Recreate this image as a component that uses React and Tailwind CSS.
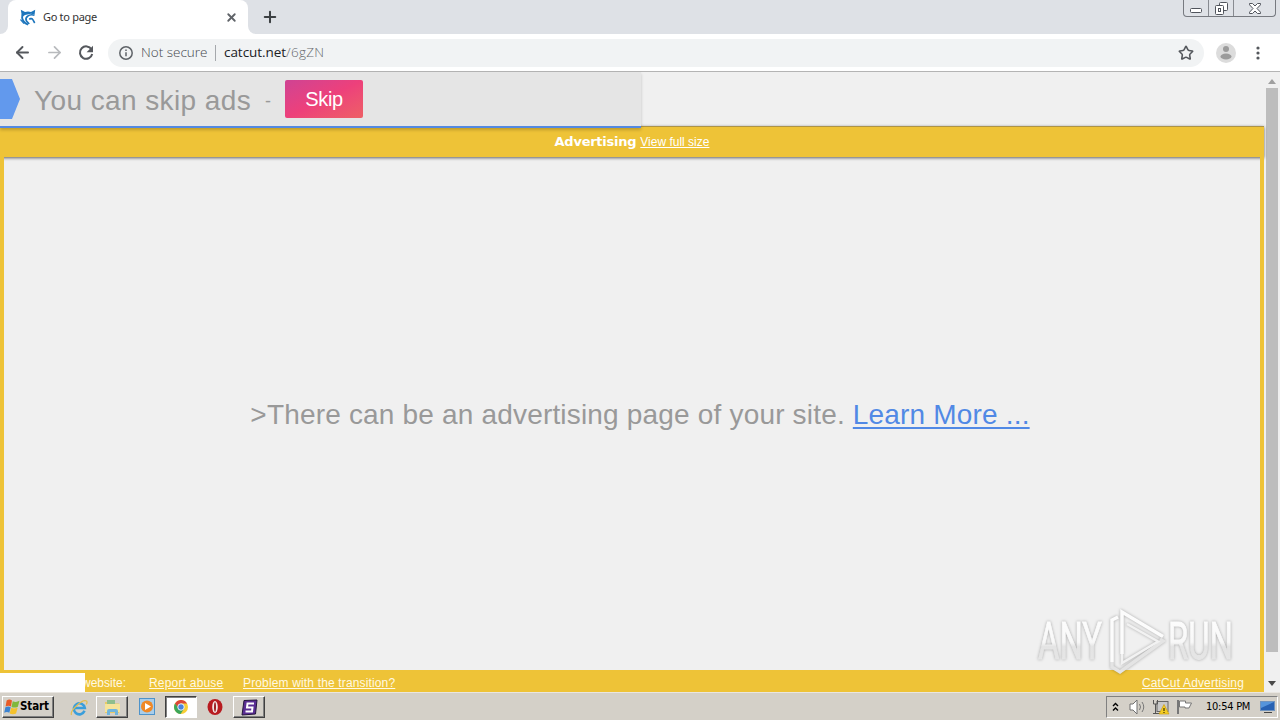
import { Star, X, Plus, ArrowLeft, ArrowRight } from 'lucide-react';

function CatLogo() {
  return (
    <svg width="16" height="17" viewBox="0 0 16 17" fill="none">
      <path d="M.8.8L5 3c2-.8 4-.8 6 0L15.200.8 14.600 5.500 11 4.800 5 6 2 8z" fill="#1c75bc" />
      <path d="M2.500 5.500C1 10 4 14.500 8 15.600" stroke="#1c75bc" strokeWidth="1.900" />
      <path d="M14.500 6.200C9 4.500 4.500 8.500 6.500 12l2.700 3" stroke="#1c75bc" strokeWidth="1.700" />
      <path d="M9.300 10.500c1-1.500 3-1 3.700.5l1.700 3" stroke="#1c75bc" strokeWidth="1.600" />
      <path d="M.5 10.500l3.500 4.200" stroke="#1c75bc" strokeWidth="1.200" />
    </svg>
  );
}

function TabStrip() {
  return (
    <div className="flex h-[34px] items-start bg-[#dee1e6]">
      <div className="flex h-full w-2 bg-white">
        <div className="w-2 rounded-br-lg bg-[#dee1e6]" />
      </div>
      <div className="flex h-full w-60 items-center rounded-t-lg bg-white pr-[10px] pl-3">
        <CatLogo />
        <span className="ml-[7px] flex-1 font-['Noto_Sans',sans-serif] text-[11px] tracking-[-0.3px] whitespace-nowrap text-[#333]">Go to page</span>
        <X size={13} strokeWidth={3.400} color="#5f6368" />
      </div>
      <div className="flex h-full w-2 bg-white">
        <div className="w-2 rounded-bl-lg bg-[#dee1e6]" />
      </div>
      <Plus size={18} strokeWidth={2.700} color="#3c4043" className="mt-2 ml-[5px]" />
      <div className="mr-1 ml-auto flex h-[17px] w-[93px] divide-x divide-[#888b91] rounded-b-[4px] border border-t-0 border-[#777a80] bg-[#dfe2e7]">
        <div className="flex w-[25px] justify-center pt-[8px]">
          <svg width="12" height="5" viewBox="0 0 12 5"><rect x=".5" y=".5" width="11" height="4" rx="1" fill="#fff" stroke="#50545c" /></svg>
        </div>
        <div className="flex w-[25px] justify-center pt-[2px]">
          <svg width="13" height="13" viewBox="0 0 13 13" fill="#fff" stroke="#50545c">
            <rect x="4.500" y=".5" width="8" height="8" rx="1" />
            <rect x=".5" y="3.500" width="8" height="9" rx="1" />
            <rect x="3.500" y="6.500" width="2" height="3" />
          </svg>
        </div>
        <div className="flex flex-1 justify-center pt-[3px]">
          <svg width="12" height="11" viewBox="0 0 12 11">
            <path d="M.5.5h3L6 3 8.500.5h3v1.300L8 5.500l3.500 3.700v1.300h-3L6 8l-2.500 2.500h-3V9.200L4 5.500.5 1.800z" fill="#fff" stroke="#50545c" />
          </svg>
        </div>
      </div>
    </div>
  );
}

function Toolbar() {
  return (
    <div className="flex h-[38px] items-center border-b border-[#b4b4b4] bg-white pl-[13px] font-['Open_Sans',sans-serif]">
      <ArrowLeft size={19} strokeWidth={2.400} color="#55585d" />
      <ArrowRight size={19} strokeWidth={2.200} color="#b8babd" className="ml-[13px]" />
      <svg width="16" height="16" viewBox="0 0 16 16" fill="none" className="ml-[14px]">
        <path d="M13.500 4.400A6.200 6.200 0 1 0 14.200 9" stroke="#55585d" strokeWidth="2" />
        <path d="M15 .8v6.400H8.600z" fill="#55585d" />
      </svg>
      <div className="ml-[14px] flex h-[28px] w-[1096px] items-center rounded-full bg-[#f1f3f4] pr-[10px] pl-[11px] whitespace-nowrap">
        <svg width="14" height="14" viewBox="0 0 14 14" fill="none" stroke="#5f6368" strokeWidth="1.500">
          <circle cx="7" cy="7" r="6.200" />
          <path d="M7 6.200v4M7 3.500V5" />
        </svg>
        <span className="ml-2 w-[67px] text-[13.500px] font-light text-[#44474c]">Not secure</span>
        <span className="ml-[7px] h-4 w-px bg-[#a5a8ac]" />
        <span className="ml-2 flex-1 text-[13.500px] font-light tracking-[0.3px] text-[#66696d]"><span className="font-normal tracking-[-0.05px] text-[#202124]">catcut.net</span>/6gZN</span>
        <Star size={16} strokeWidth={2.400} color="#55585d" />
      </div>
      <svg width="20" height="20" viewBox="0 0 20 20" className="ml-3">
        <circle cx="10" cy="10" r="10" fill="#dcdcdc" />
        <circle cx="10" cy="6" r="3" fill="#9b9b9b" />
        <ellipse cx="10" cy="13.500" rx="5.500" ry="3" fill="#9b9b9b" />
      </svg>
      <svg width="4" height="14" viewBox="0 0 4 14" fill="#55585d" className="ml-5">
        <circle cx="2" cy="2" r="1.600" /><circle cx="2" cy="7" r="1.600" /><circle cx="2" cy="12" r="1.600" />
      </svg>
    </div>
  );
}

function AnyRun() {
  return (
    <div className="absolute top-[534px] left-[1030px]">
      <svg width="214" height="74" viewBox="-4 0 214 74" fill="none" className="drop-shadow-[0_0_1.5px_rgba(0,0,0,0.3)]">
        <defs>
          <linearGradient id="fade" gradientUnits="userSpaceOnUse" x1="0" y1="12" x2="0" y2="56">
            <stop offset="0" stopColor="#fdfdfd" />
            <stop offset=".55" stopColor="#f8f8f8" />
            <stop offset=".65" stopColor="#e4e4e4" />
            <stop offset="1" stopColor="#e6e6e6" />
          </linearGradient>
        </defs>
        <g fill="url(#fade)" stroke="url(#fade)" strokeWidth=".8" fontFamily="Roboto, sans-serif" fontWeight="400" fontSize="51">
          <text x="4" y="53" textLength="64" lengthAdjust="spacingAndGlyphs">ANY</text>
          <text x="134" y="53" textLength="65" lengthAdjust="spacingAndGlyphs">RUN</text>
        </g>
        <path d="M88 48V6l41 24.500M84 11l-6 3v42" stroke="#fcfcfc" strokeWidth="3.500" />
        <path d="M78 56v5l8 5 43-31-3-2" stroke="#e4e4e4" strokeWidth="3.500" />
        <path d="M93 18l31 17.500L88 57V48" stroke="#f2f2f2" strokeWidth="2.500" />
      </svg>
    </div>
  );
}

function AdPage() {
  return (
    <div className="relative flex w-[1264px] flex-col bg-[#f0f0f0] font-['Liberation_Sans',Arial,sans-serif]">
      <div className="relative z-10 flex h-14 w-[641px] items-start border-b-2 border-[#5389e2] bg-[#e5e5e5] shadow-[0_2px_3px_rgba(0,0,0,0.2)]">
        <svg width="20" height="40" viewBox="0 0 20 40" className="mt-[7px]"><path d="M0 0h12l8 20-8 20H0z" fill="#6299ed" /></svg>
        <span className="mt-[9px] ml-[14px] w-[218px] text-[28px] leading-[40px] tracking-[0.4px] whitespace-nowrap text-[#999]">You can skip ads</span>
        <span className="mt-[17px] ml-[13px] w-5 text-[18px] leading-6 text-[#999]">-</span>
        <button className="mt-2 h-[38px] w-[78px] rounded-[2px] bg-linear-to-br from-[#cf4393] via-[#ed407b] to-[#ee5f65] text-[20px] tracking-[-0.4px] text-white">Skip</button>
      </div>
      <div className="-mt-[2px] flex h-[31px] items-center justify-center border-t border-[#ad9347] bg-[#eec337] text-white shadow-[0_1px_3px_rgba(0,0,0,0.6)]">
        <span className="font-['DejaVu_Sans',sans-serif] text-[13px] font-bold tracking-[-0.25px]">Advertising</span>
        <a className="ml-1 text-[12px] underline">View full size</a>
      </div>
      <div className="flex h-[513px] items-center justify-center border-x-4 border-[#eec337] pt-[2px] pl-4 text-[28px] tracking-[0.18px] whitespace-nowrap text-[#999]">
        <p>&gt;There can be an advertising page of your site. <a className="text-[#5189e5] underline decoration-2 underline-offset-[3px]">Learn More ...</a></p>
      </div>
      <div className="flex h-[22px] items-center bg-[#eec337] pr-5 text-[12px] whitespace-nowrap text-[#fff9e4]">
        <div className="relative z-10 mt-[3px] h-[19px] w-[85px] bg-white" />
        <span className="mt-[3px] -ml-[3px] w-[67px]">website:</span>
        <a className="mt-[3px] w-[94px] tracking-[0.2px] underline">Report abuse</a>
        <a className="mt-[3px] tracking-[0.15px] underline">Problem with the transition?</a>
        <a className="mt-[3px] ml-auto tracking-[0.15px] underline">CatCut Advertising</a>
      </div>
      <AnyRun />
    </div>
  );
}

function Scrollbar() {
  return (
    <div className="flex w-4 flex-col items-center bg-[#f0f0f0] pt-[7px] pb-[6px]">
      <svg width="8" height="5" viewBox="0 0 8 5"><path d="M0 5l4-5 4 5z" fill="#a0a0a0" /></svg>
      <div className="mt-1 h-[564px] w-3 bg-[#bdbdbd]" />
      <svg width="8" height="5" viewBox="0 0 8 5" className="mt-auto"><path d="M0 0h8L4 5z" fill="#4b4b4b" /></svg>
    </div>
  );
}

function Taskbar() {
  return (
    <div className="flex h-7 items-start border-t border-[#e9e6e1] bg-[#d4d0c8] pt-[3px]">
      <button className="ml-[2px] flex h-[22px] w-[52px] items-center border border-t-white border-r-[#404040] border-b-[#404040] border-l-white pl-px font-['DejaVu_Sans_Condensed','DejaVu_Sans',sans-serif] text-[11.500px] font-bold tracking-[-0.1px] text-black shadow-[inset_-1px_-1px_#808080]">
        <svg width="16" height="16" viewBox="0 0 15 15" className="shrink-0">
          <path d="M2.500 1.500c2-1.500 3.500-1 5 0L6.500 7C5 6 3.500 6 1.500 7z" fill="#e85b27" />
          <path d="M8.200 2c2 1 4 1 6.300-.3l-1.500 5.500c-2 1-4 1-6 .2z" fill="#80b83c" />
          <path d="M1.300 7.800c2-1 3.500-1 5 0L5 13c-1.500-1-3-1-4.800 0z" fill="#3c83d1" />
          <path d="M6.800 8.100c2 1 3.500 1 6 0l-1.500 5.500c-2 1-4 1-6 0z" fill="#f5c22c" />
        </svg>
        <span>Start</span>
      </button>
      <svg width="18" height="18" viewBox="0 0 18 18" fill="none" className="mt-[3px] ml-4">
        <path d="M14.500 11.800A5.500 5.500 0 1 1 14.800 9H5" stroke="#3a9edb" strokeWidth="2.600" />
        <path d="M1.500 16C-.5 12 12 0 16.500 2c1 .8.300 2.500-.3 3.500" stroke="#e2bd50" strokeWidth="1.200" />
      </svg>
      <div className="ml-2 flex h-[22px] w-8 items-center justify-center border border-t-white border-r-[#404040] border-b-[#404040] border-l-white shadow-[inset_-1px_-1px_#808080]">
        <svg width="17" height="17" viewBox="0 0 17 17">
          <path d="M1 3h6l1 1.500h7V14H1z" fill="#e8ca67" />
          <path d="M3 1h8v5H3z" fill="#8fbe8d" />
          <path d="M1 5h15v8H1z" fill="#f6e49b" />
          <path d="M3 16v-4q0-2 2-2h7q2 0 2 2v4h-3v-3H6v3z" fill="#71b5dc" />
        </svg>
      </div>
      <svg width="16" height="17" viewBox="0 0 16 17" className="mt-[2px] ml-[11px]">
        <rect x=".5" y=".5" width="15" height="16" fill="#a8cdea" stroke="#4e93ca" />
        <circle cx="8" cy="8.500" r="6" fill="#ef8826" />
        <path d="M6 5l6 3.500L6 12z" fill="#fff" />
      </svg>
      <div className="ml-[10px] flex h-[22px] w-8 items-center justify-center border border-t-[#404040] border-r-white border-b-white border-l-[#404040] bg-white shadow-[inset_1px_1px_#808080]">
        <svg width="14" height="14" viewBox="0 0 16 16">
          <circle cx="8" cy="8" r="8" fill="#f8ce35" />
          <path d="M1.100 4A8 8 0 0 1 15 4H8L4.500 9z" fill="#dc4738" />
          <path d="M1.100 4A8 8 0 0 0 7.500 16l4-6-6-.5z" fill="#3ca65a" />
          <circle cx="8" cy="8" r="3.700" fill="#4a83dc" stroke="#fff" />
        </svg>
      </div>
      <svg width="16" height="16" viewBox="0 0 16 16" className="mt-[3px] ml-[10px]">
        <ellipse cx="8" cy="8" rx="7.500" ry="8" fill="#b81b20" />
        <ellipse cx="8" cy="8" rx="2.800" ry="6" fill="#f3e8e6" />
        <ellipse cx="8" cy="8" rx="1" ry="4.800" fill="#9d2023" />
      </svg>
      <div className="ml-[10px] flex h-[22px] w-8 items-center justify-center border border-t-white border-r-[#404040] border-b-[#404040] border-l-white shadow-[inset_-1px_-1px_#808080]">
        <svg width="17" height="17" viewBox="0 0 17 17">
          <path d="M3 1.500l13-.5-1.500 14L1 16z" fill="#5a2d93" stroke="#24163d" />
          <path d="M13 4.500H6.500L6 8.500h5.500l-.5 4H4.500" fill="none" stroke="#fff" strokeWidth="2" />
        </svg>
      </div>
      <div className="mr-[2px] ml-auto flex h-[22px] w-[172px] items-center border border-t-[#808080] border-r-white border-b-white border-l-[#808080] pl-[5px]">
        <svg width="7" height="10" viewBox="0 0 7 10" fill="none" stroke="#000" strokeWidth="1.400"><path d="M1 4l2.500-2.500L6 4M1 8.500L3.500 6 6 8.500" /></svg>
        <svg width="17" height="16" viewBox="0 0 17 16" fill="none" className="ml-[10px]">
          <path d="M1 5h3l4-4v14l-4-4H1z" fill="#fff" stroke="#707070" />
          <path d="M10.500 5q2 3 0 6M13 3q3.500 5 0 10" stroke="#777" />
        </svg>
        <svg width="18" height="16" viewBox="0 0 18 16" className="ml-[6px]">
          <rect x="5" y="2.500" width="11" height="10" fill="#c9c9c9" stroke="#666" />
          <path d="M1.500 1v4h4V1M3.500 5v9M1 14.500h8" fill="none" stroke="#555" />
          <path d="M12 5.500l5 9.500H7z" fill="#f4cd25" stroke="#c99700" strokeWidth=".6" />
          <path d="M12 9v3M12 13v1" stroke="#3e3300" strokeWidth="1.200" />
        </svg>
        <svg width="17" height="16" viewBox="0 0 17 16" className="ml-[6px]">
          <path d="M2 1v14" stroke="#777" strokeWidth="2" />
          <path d="M3.500 2h6v2h6l-2.500 5H9V8H3.500z" fill="#fff" stroke="#777" />
        </svg>
        <span className="mt-px ml-[13px] font-['DejaVu_Sans_Condensed','DejaVu_Sans',sans-serif] text-[11px] tracking-[-0.25px] whitespace-nowrap text-black">10:54 PM</span>
        <svg width="15" height="14" viewBox="0 0 15 14" className="mr-[2px] ml-auto">
          <rect x=".5" y="1.500" width="14" height="9" fill="#2761b3" stroke="#7093bd" />
          <path d="M1 2h13L1 8z" fill="#5594db" />
          <path d="M4 12.500h8" stroke="#444" />
        </svg>
      </div>
    </div>
  );
}

export default function App() {
  return (
    <div className="flex h-[720px] w-[1280px] flex-col overflow-hidden">
      <TabStrip />
      <Toolbar />
      <div className="flex h-[620px]">
        <AdPage />
        <Scrollbar />
      </div>
      <Taskbar />
    </div>
  );
}
